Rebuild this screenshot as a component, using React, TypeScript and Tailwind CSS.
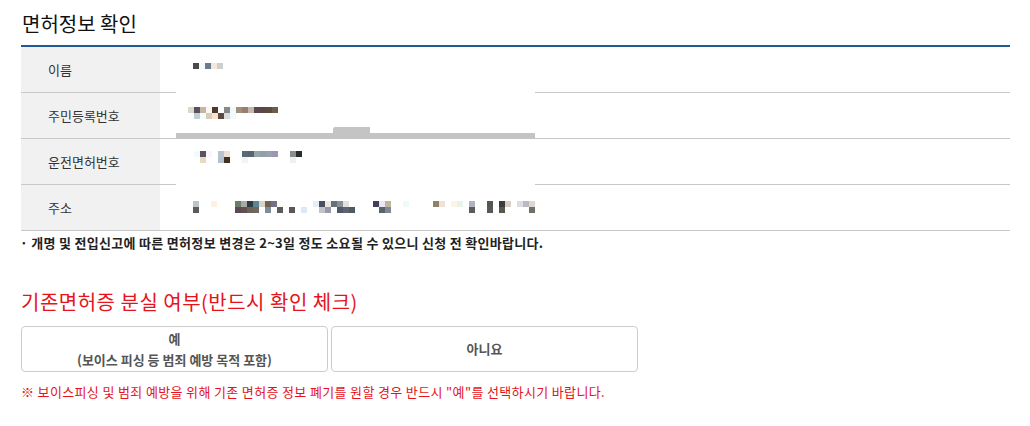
import React from 'react';

type Row = string[];

interface MosaicProps {
  rows: Row[];
  className?: string;
}

// pixelated (redacted) value, 6px cells
function Mosaic({ rows, className = '' }: MosaicProps) {
  return (
    <div className={`relative z-10 flex flex-col ${className}`}>
      {rows.map((row, r) => (
        <div key={r} className="flex">
          {row.map((c, i) => (
            <div key={i} className="w-[6px] h-[6px]" style={{ backgroundColor: c || 'transparent' }} />
          ))}
        </div>
      ))}
    </div>
  );
}

function sparse(len: number, cells: Record<number, string>): Row {
  return Array.from({ length: len }, (_, i) => cells[i] ?? '');
}

const nameRows: Row[] = [['#4a4a4a', '#f4fafc', '#6b7b8f', '#f7e5e0', '#cfcfcf']];

const residentRows: Row[] = [
  ['#dcd8cc', '#5a5060', '#c8b4a4', '#fdf8f0', '#4a3a30', '', '#888888', '#f0fafa', '#a09080', '#9c7c6c', '#c4b8ac', '#5a4850', '#5a4848', '#5c4c40', '#6c5c4c'],
  ['', '#c0d0d8', '#f4fcfc', '#d4ccbc', '#f8e4cc', '#5c4c40', '#dcdcdc', '#f0fcfc'],
];

const licenseRows: Row[] = [
  sparse(18, { 0: '#f0fcfc', 1: '#5c5060', 2: '#fcf4fc', 4: '#b8c4cc', 5: '#ece0d8', 8: '#5a6a78', 9: '#5a6470', 10: '#98a4ac', 11: '#90a0a8', 12: '#9aa0b0', 13: '#9898b0', 16: '#888e8c', 17: '#2c2c28' }),
  sparse(18, { 1: '#e8dcc0', 4: '#b4c0cc', 5: '#403020', 8: '#f4f4f8', 16: '#eef2ee' }),
];

const addressRows: Row[] = [
  sparse(58, { 0: '#bcc4c8', 3: '#fff0e0', 7: '#6c7c6c', 8: '#a8a8a8', 9: '#2c3c3c', 10: '#5c8494', 11: '#d8d4c4', 12: '#6c6458', 13: '#747088', 14: '#fcfcf0', 20: '#e8ecf8', 21: '#4a4e60', 22: '#eaeae0', 23: '#6a7078', 24: '#8a9098', 25: '#e0e0dc', 30: '#404058', 31: '#e8e8f4', 32: '#c0b4a0', 35: '#eefcf4', 40: '#8a8468', 41: '#f0e0d8', 43: '#fcf4e4', 44: '#e8f4e8', 46: '#b0b4c0', 49: '#505850', 51: '#3c3c38', 52: '#d8ccc8', 54: '#dcdce4', 55: '#b8bcc0', 56: '#e0d8d0' }),
  sparse(58, { 0: '#5c5c5c', 7: '#5a4a58', 8: '#605050', 9: '#6c6458', 10: '#706860', 12: '#7c8c98', 14: '#5c5c5c', 16: '#585858', 18: '#dce8f8', 21: '#c0c4c8', 22: '#9898a8', 24: '#505868', 25: '#5c6470', 26: '#505860', 31: '#586468', 32: '#808898', 46: '#5c5c5c', 49: '#585858', 51: '#585850', 56: '#707068' }),
];

const rows = [
  { label: '이름', mosaic: nameRows, pad: 'pt-[16px] pl-[33px]' },
  { label: '주민등록번호', mosaic: residentRows, pad: 'pt-[14px] pl-[28px]' },
  { label: '운전면허번호', mosaic: licenseRows, pad: 'pt-[12px] pl-[34px]' },
  { label: '주소', mosaic: addressRows, pad: 'pt-[16px] pl-[33px]' },
];

export default function App() {
  return (
    <div className="w-[1030px] h-[426px] bg-white text-[#333] font-['Noto_Sans_CJK_KR',sans-serif]">
      <div className="ml-[21px] w-[989px]">
        {/* Section title */}
        <div className="h-[45px] flex items-center">
          <h2 className="text-[20px] leading-[24px] text-[#111] font-normal pl-px mt-[2px]">면허정보 확인</h2>
        </div>

        {/* Info table */}
        <div className="relative border-t-2 border-[#1f5a96]">
          {rows.map((row) => (
            <div key={row.label} className="flex h-[46px] border-b border-[#c8c8c8]">
              <div className="w-[139px] shrink-0 bg-[#f1f1f1] flex items-center pl-[27px] text-[13px] text-[#333]">
                {row.label}
              </div>
              <div className={`flex-1 ${row.pad}`}>
                <Mosaic rows={row.mosaic} />
              </div>
            </div>
          ))}

          {/* redaction patch covering part of the value column */}
          <div className="absolute left-[155px] top-[41px] w-[359px] h-[101px] bg-white">
            <div className="absolute left-[157px] top-[39px] w-[37px] h-[6px] bg-[#c4c4c4] rounded-tl-[2px]" />
            <div className="absolute left-0 top-[45px] w-full h-[6px] bg-[#c4c4c4]" />
          </div>
        </div>

        <p className="mt-[3px] text-[13px] leading-[18px] font-bold tracking-[0.3px] text-[#222] -ml-px">
          · 개명 및 전입신고에 따른 면허정보 변경은 2~3일 정도 소요될 수 있으니 신청 전 확인바랍니다.
        </p>

        {/* Old license loss */}
        <h2 className="mt-[36px] text-[20px] leading-[28px] tracking-[0.5px] text-[#e5131b] font-normal">
          기존면허증 분실 여부(반드시 확인 체크)
        </h2>

        <div className="mt-[10px] flex gap-[3px]">
          <button className="w-[307px] h-[46px] border border-[#cccccc] rounded-[4px] bg-white flex flex-col items-center justify-center text-[13px] leading-[21px] font-semibold text-[#555]">
            <span>예</span>
            <span>(보이스 피싱 등 범죄 예방 목적 포함)</span>
          </button>
          <button className="w-[307px] h-[46px] border border-[#cccccc] rounded-[4px] bg-white flex items-center justify-center text-[13px] font-semibold text-[#555]">
            아니요
          </button>
        </div>

        <p className="mt-[11px] text-[13px] leading-[18px] tracking-[0.35px] text-[#e5131b]">
          ※ 보이스피싱 및 범죄 예방을 위해 기존 면허증 정보 폐기를 원할 경우 반드시 "예"를 선택하시기 바랍니다.
        </p>
      </div>
    </div>
  );
}
